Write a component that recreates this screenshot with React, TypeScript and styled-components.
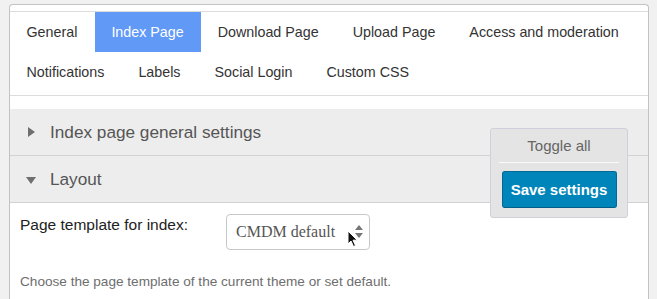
import React from "react";
import styled, { createGlobalStyle } from "styled-components";

const Global = createGlobalStyle`
  html, body { margin: 0; padding: 0; background: #f1f1f1; }
  body { font-family: "Liberation Sans", Arial, sans-serif; overflow: hidden; }
  * { box-sizing: border-box; }
`;

const Page = styled.div`
  padding: 4px 8px 0 9px;
  height: 299px;
`;

const Box = styled.div`
  position: relative;
  background: #fff;
  border: 1px solid #c3c3c3;
  border-bottom: none;
  border-radius: 4px 4px 0 0;
  padding-top: 6px;
  height: 295px;
`;

const TabNav = styled.ul`
  list-style: none;
  margin: 0;
  padding: 0 0 3px 0;
  display: flex;
  flex-wrap: wrap;
  border-top: 1px solid #dcdcdc;
  border-bottom: 1px solid #dcdcdc;
`;

const Tab = styled.li<{ $active?: boolean }>`
  height: 40px;
  line-height: 40px;
  padding: 0 17.5px 0 16.5px;
  font-size: 14.3px;
  color: ${(p) => (p.$active ? "#fff" : "#333")};
  background: ${(p) => (p.$active ? "#6199f7" : "transparent")};
  white-space: nowrap;
`;

const Sections = styled.div`
  padding-top: 13px;
`;

const SectionHeader = styled.div`
  display: flex;
  align-items: center;
  height: 47px;
  background: #ededed;
  border-bottom: 1px solid #d2d2d2;
  padding-left: 16px;
  gap: 14px;
  font-size: 17.2px;
  color: #555;
`;

const Arrow = styled.span<{ $open?: boolean }>`
  width: 0;
  height: 0;
  ${(p) =>
    p.$open
      ? `border-left: 5px solid transparent; border-right: 5px solid transparent; border-top: 7px solid #6f6f6f; margin-top: 3px;`
      : `border-top: 5px solid transparent; border-bottom: 5px solid transparent; border-left: 7px solid #6f6f6f; margin-left: 2px; margin-right: 1px;`}
`;

const Content = styled.div`
  padding: 11px 10px 0 10px;
`;

const FieldRow = styled.div`
  display: flex;
  align-items: flex-start;
`;

const Label = styled.label`
  width: 206px;
  padding-top: 2px;
  font-size: 15.5px;
  color: #222;
`;

const SelectWrap = styled.div`
  position: relative;
  width: 144px;
  height: 36px;
  border: 1px solid #c8c8c8;
  border-radius: 4px;
  background: #fff;
  display: flex;
  align-items: center;
  padding-left: 9px;
  font-family: "Liberation Serif", "Times New Roman", serif;
  font-size: 16px;
  color: #555;
`;

const Spinner = styled.svg`
  position: absolute;
  right: 6px;
  top: 10px;
`;

const Cursor = styled.svg`
  position: absolute;
  left: 120px;
  top: 15px;
`;

const Help = styled.p`
  margin: 24px 0 0 0;
  font-size: 13.6px;
  color: #6e6e6e;
`;

const TogglePanel = styled.div`
  position: absolute;
  left: 480px;
  top: 123px;
  width: 138px;
  height: 90px;
  background: #e4e4e4;
  border: 1px solid #d0d0dc;
  border-radius: 3px;
  padding: 0 8px;
  display: flex;
  flex-direction: column;
  align-items: center;
`;

const ToggleAll = styled.div`
  width: 100%;
  text-align: center;
  font-size: 15px;
  color: #666;
  height: 34px;
  line-height: 34px;
  border-bottom: 1px solid #fafafa;
`;

const SaveButton = styled.button`
  margin-top: 8px;
  width: 115px;
  height: 37px;
  background: #0085ba;
  border: 1px solid #006a95;
  border-bottom-color: #005f86;
  border-radius: 3px;
  color: #fff;
  font-family: "Liberation Sans", Arial, sans-serif;
  font-size: 15px;
  font-weight: 600;
  padding: 0;
`;

const tabs = [
  "General",
  "Index Page",
  "Download Page",
  "Upload Page",
  "Access and moderation",
  "Notifications",
  "Labels",
  "Social Login",
  "Custom CSS",
];

export default function App() {
  return (
    <>
      <Global />
      <Page>
        <Box>
          <TabNav>
            {tabs.map((t) => (
              <Tab key={t} $active={t === "Index Page"}>
                {t}
              </Tab>
            ))}
          </TabNav>
          <Sections>
            <SectionHeader>
              <Arrow />
              Index page general settings
            </SectionHeader>
            <SectionHeader>
              <Arrow $open />
              Layout
            </SectionHeader>
          </Sections>
          <Content>
            <FieldRow>
              <Label>Page template for index:</Label>
              <SelectWrap>
                CMDM default
                <Spinner width="8" height="14" viewBox="0 0 8 14">
                  <path d="M4 0 L8 5 L0 5 Z" fill="#777" />
                  <path d="M0 8 L8 8 L4 13 Z" fill="#777" />
                </Spinner>
                <Cursor width="12" height="18" viewBox="0 0 12 18">
                  <path
                    d="M1 1 L1 14 L4 11 L6.5 16.5 L8.5 15.5 L6 10.2 L10.2 10.2 Z"
                    fill="#111"
                    stroke="#fff"
                    strokeWidth="1"
                  />
                </Cursor>
              </SelectWrap>
            </FieldRow>
            <Help>Choose the page template of the current theme or set default.</Help>
          </Content>
          <TogglePanel>
            <ToggleAll>Toggle all</ToggleAll>
            <SaveButton>Save settings</SaveButton>
          </TogglePanel>
        </Box>
      </Page>
    </>
  );
}
